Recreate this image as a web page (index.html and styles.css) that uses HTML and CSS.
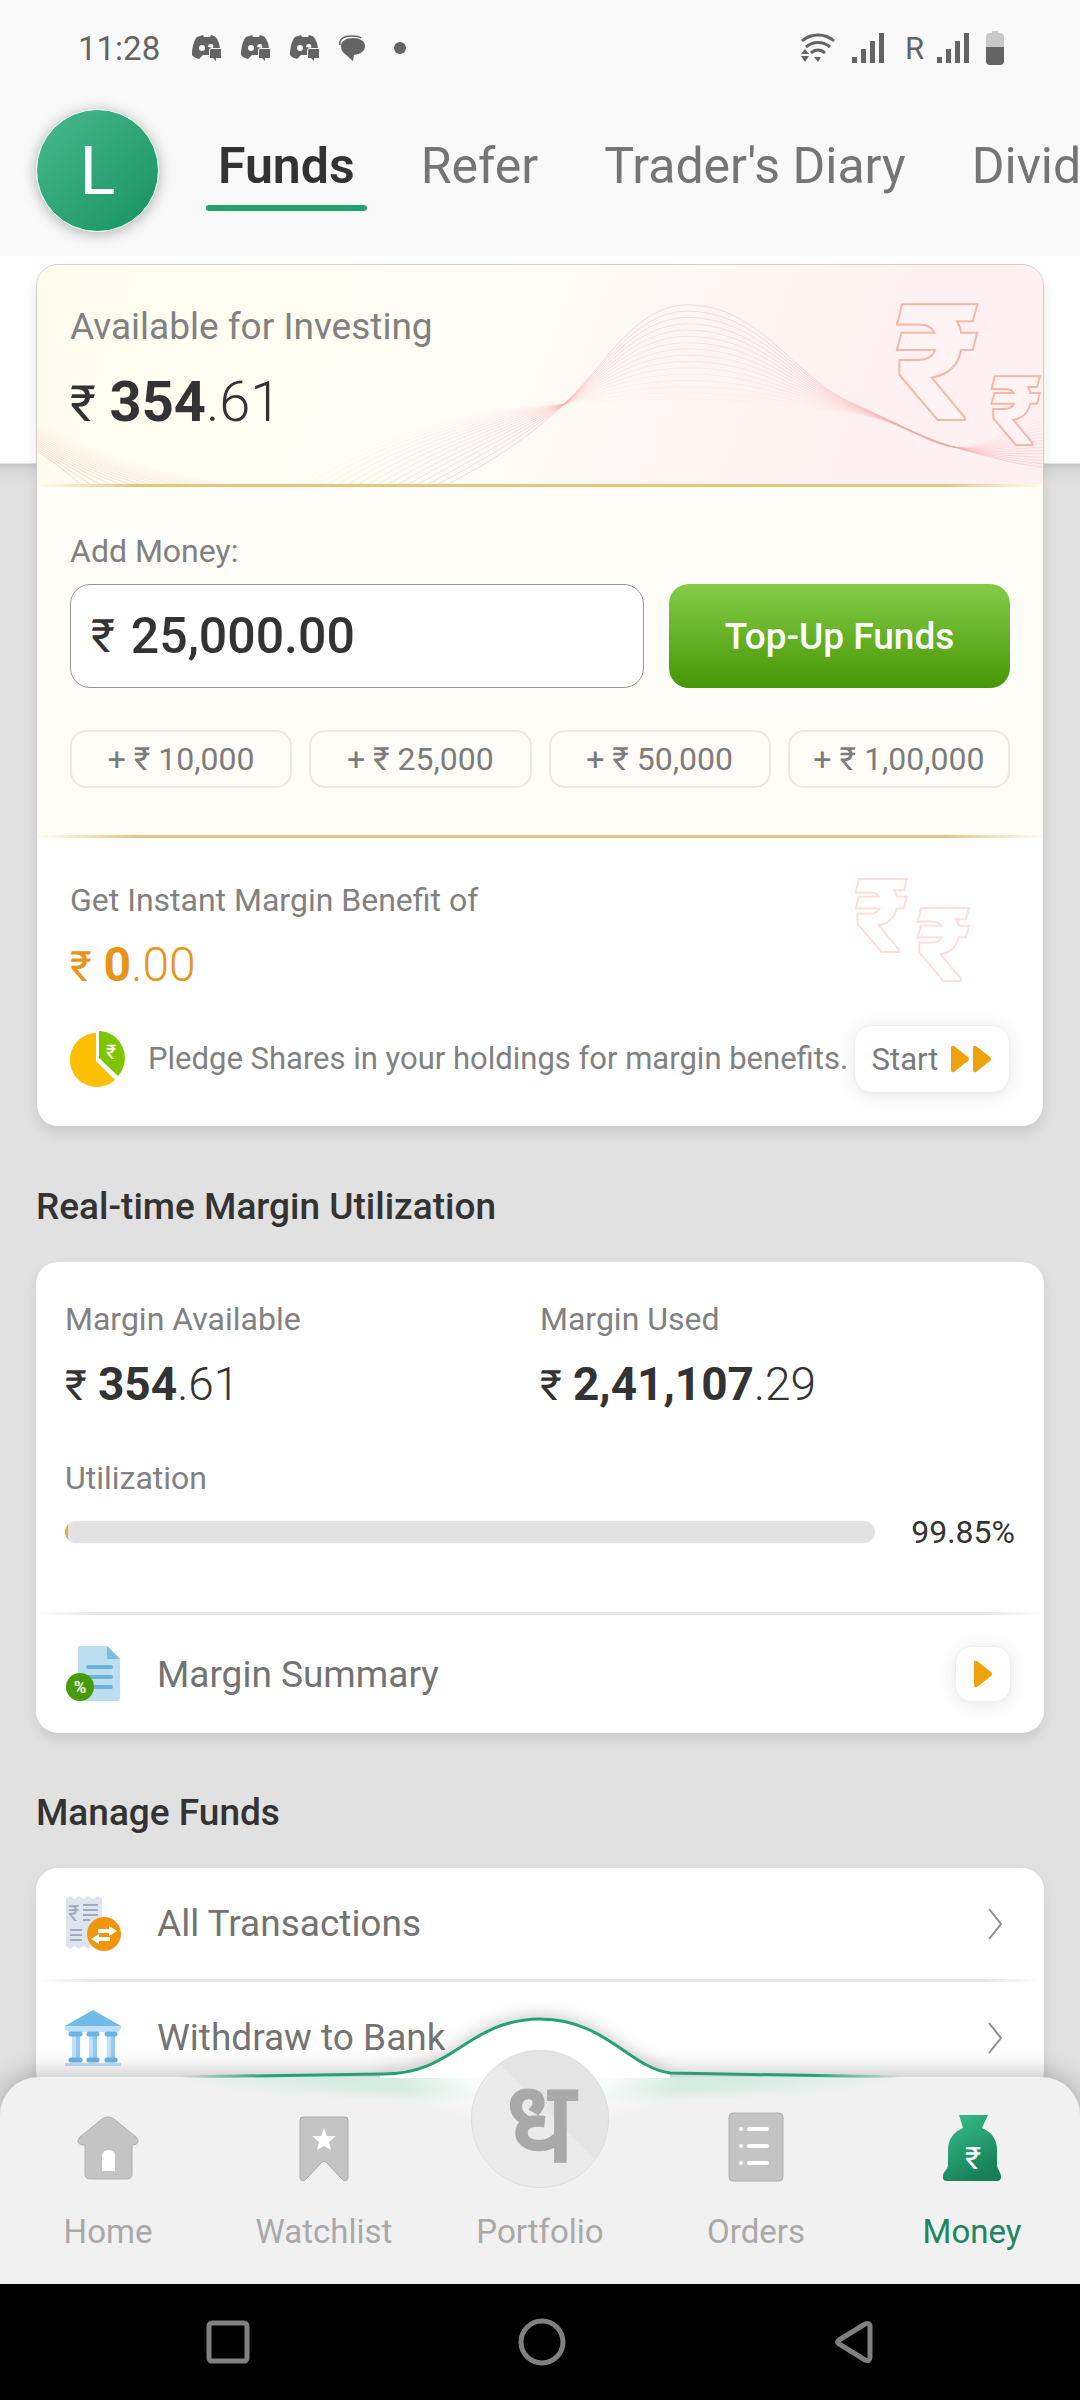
FILE: index.html
```html
<!DOCTYPE html>
<html lang="en">
<head>
    <meta charset="UTF-8">
    <meta name="viewport" content="width=device-width, initial-scale=1.0">
    <title>Funds</title>
    <link rel="stylesheet" href="styles.css">
</head>
<body>
    <!-- Shared shapes -->
    <svg class="defs" width="0" height="0" aria-hidden="true">
        <symbol id="discord" viewBox="0 0 30 26">
            <path fill-rule="evenodd" d="M8 1l3-1 1 2h6l1-2 3 1c3 1 5 6 6 12h-8c-2 0-3 1-3 3v4h-6l-2 2-2 2C4 23 1 22 0 20 0 12 2 5 5 2zM10 10a3 3 0 1 0 0 6 3 3 0 0 0 0-6zM19 9c-2 0-3 1-3 3l5 1c1-2 0-4-2-4z"/>
            <path d="M19 14h10v9h-5v3l-3-3h-3v-8z"/>
        </symbol>
        <symbol id="signal" viewBox="0 0 32 30">
            <path d="M0 24h5v6H0zM9 16h5v14H9zM18 8h5v22h-5zM27 0h5v30h-5z"/>
        </symbol>
        <symbol id="play" viewBox="0 0 20 28">
            <path d="M1 3Q1 0 4 1L18 12Q20 14 18 16L4 27Q1 28 1 25z"/>
        </symbol>
        <symbol id="chevron" viewBox="0 0 16 32">
            <path d="M2 1L14 16 2 31" fill="none" stroke="#8d8d8d" stroke-width="2"/>
        </symbol>
    </svg>

    <header class="header">
        <div class="status-bar">
            <div class="status-left">
                <span class="clock">11:28</span>
                <svg width="30" height="26"><use href="#discord"/></svg>
                <svg width="30" height="26"><use href="#discord"/></svg>
                <svg width="30" height="26"><use href="#discord"/></svg>
                <svg width="28" height="26" viewBox="0 0 28 26">
                    <path d="M1 10C0 3 6 1 12 1c5 0 8 0 10 2" fill="none" stroke="#646464" stroke-width="1.5"/>
                    <path d="M14 3c7 0 12 3 12 8s-4 8-11 9l-1 6-8-7c-3-2-4-5-4-8 0-5 5-8 12-8z"/>
                </svg>
                <span class="dot"></span>
            </div>
            <div class="status-right">
                <svg width="34" height="30" viewBox="0 0 34 30">
                    <g fill="none" stroke="#646464" stroke-width="3">
                        <path d="M1 8C10 0 24 0 33 8M5 14c7-6 17-6 24 0M10 20c4-4 10-4 14 0"/>
                    </g>
                    <path d="M13 24h7l-3 5zM0 21l4-5 4 5zM0 23h8l-4 6z"/>
                </svg>
                <svg width="32" height="30"><use href="#signal"/></svg>
                <span class="roaming">R</span>
                <svg width="32" height="30"><use href="#signal"/></svg>
                <svg width="18" height="34" viewBox="0 0 18 34">
                    <path fill="#c9c9c9" d="M6 0h6v2h2q4 0 4 4v11H0V6q0-4 4-4h2z"/>
                    <path d="M0 16h18v14q0 4-4 4H4q-4 0-4-4z"/>
                </svg>
            </div>
        </div>
        <nav class="tabs">
            <a class="avatar" href="#profile">L</a>
            <a class="tab active" href="#funds">Funds</a>
            <a class="tab" href="#refer">Refer</a>
            <a class="tab" href="#diary">Trader's Diary</a>
            <a class="tab" href="#dividends">Dividends</a>
        </nav>
    </header>

    <main class="content">
        <section class="card funds-card">
            <div class="available">
                <svg class="waves" id="waves" viewBox="0 0 1010 220" preserveAspectRatio="none" aria-hidden="true"></svg>
                <svg class="rupees" width="150" height="180" viewBox="0 0 150 180" aria-hidden="true">
                    <text x="2" y="140" font-size="160">₹</text>
                    <text x="98" y="165" font-size="94">₹</text>
                </svg>
                <p class="label large">Available for Investing</p>
                <p class="amount big"><span class="sign">₹</span> <b>354</b>.61</p>
            </div>
            <hr class="gold">
            <form class="add-money">
                <label class="label" for="money">Add Money:</label>
                <div class="money-row">
                    <div class="money-box">
                        <span>₹</span>
                        <input type="text" id="money" value="25,000.00">
                    </div>
                    <button class="topup" type="button">Top-Up Funds</button>
                </div>
                <div class="chips">
                    <button type="button">+ ₹ 10,000</button>
                    <button type="button">+ ₹ 25,000</button>
                    <button type="button">+ ₹ 50,000</button>
                    <button type="button">+ ₹ 1,00,000</button>
                </div>
            </form>
            <hr class="gold">
            <div class="benefit">
                <svg class="rupees faint" width="124" height="110" viewBox="0 0 124 110" aria-hidden="true">
                    <text x="2" y="73" font-size="100">₹</text>
                    <text x="64" y="102" font-size="100">₹</text>
                </svg>
                <p class="label">Get Instant Margin Benefit of</p>
                <p class="amount orange"><span class="sign">₹</span> <b>0</b>.00</p>
                <div class="pledge">
                    <svg width="56" height="58" viewBox="0 0 56 58">
                        <path fill="#fcbf02" d="M26 3v28l19 19A27 27 0 1 1 26 3z"/>
                        <path fill="#80c400" d="M29 1a27 27 0 0 1 19 45L29 28z"/>
                        <text x="36" y="29" font-size="20" font-weight="400" fill="#fff">₹</text>
                    </svg>
                    <p class="label">Pledge Shares in your holdings for margin benefits.</p>
                    <button class="start" type="button">Start
                        <span class="forward">
                            <svg width="20" height="28"><use href="#play"/></svg>
                            <svg width="20" height="28"><use href="#play"/></svg>
                        </span>
                    </button>
                </div>
            </div>
        </section>

        <h2>Real-time Margin Utilization</h2>
        <section class="card">
            <div class="margin">
                <div class="margin-grid">
                    <div>
                        <p class="label">Margin Available</p>
                        <p class="amount"><span class="sign">₹</span> <b>354</b>.61</p>
                    </div>
                    <div>
                        <p class="label">Margin Used</p>
                        <p class="amount"><span class="sign">₹</span> <b>2,41,107</b>.29</p>
                    </div>
                </div>
                <p class="label">Utilization</p>
                <div class="usage">
                    <div class="bar"><div class="bar-fill" style="width: 0.4%"></div></div>
                    <span>99.85%</span>
                </div>
            </div>
            <hr>
            <div class="row summary">
                <svg width="56" height="56" viewBox="0 0 56 56">
                    <path fill="#bbdff0" d="M15 0h27l13 13v40q0 2-2 2H15q-2 0-2-2V2q0-2 2-2z"/>
                    <path fill="#7cbddd" d="M42 0l13 13H42z"/>
                    <path stroke="#6fb1d6" stroke-width="4" stroke-linecap="round" d="M23 21h23M23 31h23M23 41h23"/>
                    <circle cx="15" cy="41" r="14" fill="#4a9b0b"/>
                    <text x="15" y="47" text-anchor="middle" font-size="17" font-weight="500" fill="#fff">%</text>
                </svg>
                <span>Margin Summary</span>
                <button class="open" type="button" aria-label="Open margin summary">
                    <svg width="20" height="28"><use href="#play"/></svg>
                </button>
            </div>
        </section>

        <h2>Manage Funds</h2>
        <section class="card">
            <a class="row" href="#transactions">
                <svg width="56" height="56" viewBox="0 0 56 56">
                    <path fill="#dfe5ef" d="M1 3l4-3 4 3 5-3 5 3 4-3 5 3 5-3 4 3v47l-4 3-5-3-5 3-4-3-5 3-5-3-4 3-4-3z"/>
                    <path stroke="#9fabbd" stroke-width="2" d="M18 9h15M18 14h15M18 19h15M18 24h7M5 34h12M5 39h12M5 44h12"/>
                    <text x="3" y="25" font-size="22" fill="#9fabbd">₹</text>
                    <circle cx="39" cy="38" r="17" fill="#f0950c"/>
                    <path fill="#fff" d="M33 33h11v-3l8 5-8 5v-3H33zM45 41H34v-3l-8 5 8 5v-3h11z"/>
                </svg>
                <span>All Transactions</span>
                <svg class="chevron" width="16" height="32"><use href="#chevron"/></svg>
            </a>
            <hr>
            <a class="row" href="#withdraw">
                <svg width="56" height="56" viewBox="0 0 56 56">
                    <path fill="#c0e0fa" d="M0 16h56v3l-3 3H3l-3-3zM7 23h8v28H7zM24 23h8v28h-8zM42 23h8v28h-8zM0 53h56v3H0z"/>
                    <path fill="#90cbf7" d="M11 25h4v24h-4zM28 25h4v24h-4zM46 25h4v24h-4z"/>
                    <path fill="#6ebde8" d="M28 0l28 16H0z"/>
                    <path stroke="#6cb3df" stroke-width="5" stroke-linecap="round" d="M6 24h9M24 24h8M42 24h8M6 50h9M24 50h8M42 50h8"/>
                </svg>
                <span>Withdraw to Bank</span>
                <svg class="chevron" width="16" height="32"><use href="#chevron"/></svg>
            </a>
        </section>
    </main>

    <footer class="footer">
        <nav class="bottom-nav">
            <svg class="bump" width="740" height="80" viewBox="0 0 740 80" aria-hidden="true">
                <defs>
                    <linearGradient id="edge">
                        <stop offset="0" stop-color="#25a274" stop-opacity="0"/>
                        <stop offset=".12" stop-color="#25a274"/>
                        <stop offset=".88" stop-color="#25a274"/>
                        <stop offset="1" stop-color="#25a274" stop-opacity="0"/>
                    </linearGradient>
                </defs>
                <path class="bump-fill" d="M210 80V76C285 78 295 22 370 21 435 21 460 70 500 75V80z" fill="#fff"/>
                <path d="M10 79L210 76C285 78 295 22 370 21 435 21 460 70 500 75L730 79" fill="none" stroke="url(#edge)" stroke-width="3"/>
            </svg>
            <a href="#home">
                <svg width="62" height="66" viewBox="0 0 62 66">
                    <path d="M25 3q6-4 12 0l22 18q5 6-2 8h-2v29q0 5-5 5H13q-5 0-5-5V29H5q-7-2-2-8z" fill="#c4c4c4" stroke="#b0b0b0"/>
                    <path d="M25 55V41q0-7 7-7t6 7v14z" fill="#fff"/>
                </svg>
                Home
            </a>
            <a href="#watchlist">
                <svg width="50" height="66" viewBox="0 0 50 66">
                    <path d="M4 1h42q3 0 3 3v58q-2 5-6 1L27 46q-2-2-4 0L7 63q-4 4-6-1V4q0-3 3-3z" fill="#c4c4c4" stroke="#a9a9a9"/>
                    <path d="M25 12l3 8 9 0-7 6 2 8-7-4-7 4 2-8-7-6 9 0z" fill="#fff"/>
                </svg>
                Watchlist
            </a>
            <a href="#portfolio" class="portfolio">
                <span class="logo" lang="hi">ध</span>
                Portfolio
            </a>
            <a href="#orders">
                <svg width="56" height="70" viewBox="0 0 56 70">
                    <rect x="1" y="1" width="54" height="68" rx="4" fill="#c4c4c4" stroke="#b0b0b0"/>
                    <path d="M13 17h0M13 34h0M13 51h0M21 17h18M21 34h18M21 51h18" stroke="#fff" stroke-width="4" stroke-linecap="round"/>
                </svg>
                Orders
            </a>
            <a href="#money" class="current">
                <svg width="60" height="68" viewBox="0 0 60 68">
                    <defs>
                        <linearGradient id="bag" x2=".5" y2="1">
                            <stop offset="0" stop-color="#38c08e"/>
                            <stop offset="1" stop-color="#178058"/>
                        </linearGradient>
                    </defs>
                    <path d="M17 1h29l-6 13c10 4 15 12 15 22v16c1 4 4 6 4 11q0 4-4 4H5q-5 0-4-5c0-4 4-6 5-10V36C6 26 11 18 21 14z" fill="url(#bag)"/>
                    <text x="31" y="55" text-anchor="middle" font-size="31" fill="#fff">₹</text>
                </svg>
                Money
            </a>
        </nav>
        <div class="system-nav">
            <button type="button" aria-label="Recent apps">
                <svg width="44" height="44" viewBox="0 0 44 44"><rect x="3" y="3" width="38" height="38" rx="3"/></svg>
            </button>
            <button type="button" aria-label="Home screen">
                <svg width="48" height="48" viewBox="0 0 48 48"><circle cx="24" cy="24" r="21"/></svg>
            </button>
            <button type="button" aria-label="Back">
                <svg width="40" height="44" viewBox="0 0 40 44"><path d="M5 20L31 4q5-2 5 3v30q0 5-5 3L5 24q-3-2 0-4z"/></svg>
            </button>
        </div>
    </footer>

    <script src="waves.js"></script>
</body>
</html>
```
FILE: styles.css
```css
* {
    box-sizing: border-box;
}
body {
    margin: 0;
    min-height: 100vh;
    display: flex;
    flex-direction: column;
    font-family: Roboto, sans-serif;
    background-color: #e1e1e1;
    color: #333;
    overflow-x: hidden;
}
p, h2 {
    margin: 0;
}
a {
    color: inherit;
    text-decoration: none;
}
button, input {
    font-family: inherit;
}
svg {
    flex-shrink: 0;
}
.defs {
    position: absolute;
}

/* Header */
.header {
    background-color: #f9f9f9;
    height: 256px;
    overflow: hidden;
}
.status-bar {
    display: flex;
    justify-content: space-between;
    align-items: center;
    height: 96px;
    padding: 0 76px 0 78px;
    color: #646464;
    fill: #646464;
    font-size: 33px;
}
.status-left {
    display: flex;
    align-items: center;
    gap: 19px;
}
.clock {
    margin-right: 13px;
}
.dot {
    width: 12px;
    height: 12px;
    margin-left: 8px;
    border-radius: 50%;
    background-color: #646464;
}
.status-right {
    display: flex;
    align-items: center;
    gap: 17px;
}
.roaming {
    font-size: 31px;
    margin-right: -4px;
    margin-left: 4px;
}
.tabs {
    display: flex;
    align-items: center;
    padding-left: 36px;
    gap: 42px;
    height: 148px;
}
.avatar {
    width: 123px;
    height: 123px;
    flex-shrink: 0;
    margin-right: 5px;
    border-radius: 50%;
    border: 1px solid #e5fff5;
    background-image: linear-gradient(135deg, #4ab990, #16925f);
    box-shadow: 0 2px 14px rgba(0, 0, 0, 0.3);
    color: white;
    font-size: 66px;
    line-height: 123px;
    text-align: center;
}
.tab {
    flex-shrink: 0;
    padding: 0 12px 2px;
    border-bottom: 6px solid transparent;
    color: #757575;
    font-size: 50px;
    line-height: 74px;
}
.tab.active {
    position: relative;
    color: #333;
    font-weight: 600;
}
.tab.active::after {
    content: "";
    position: absolute;
    left: 0;
    right: 0;
    bottom: -6px;
    height: 6px;
    border-radius: 3px;
    background-color: #25a274;
}

/* Content */
.content {
    flex: 1;
    padding: 8px 36px 20px;
    background-image: linear-gradient(#fff 207px, #c6c6c6 208px, #d8d8d8 214px, #e1e1e1 230px);
}
.card {
    border-radius: 22px;
    background-color: white;
    box-shadow: 0 6px 12px rgba(0, 0, 0, 0.1);
    overflow: hidden;
}
.funds-card {
    border: 1px solid #d0d0d0;
}
h2 {
    padding: 58px 0 33px;
    font-size: 37px;
    line-height: 44px;
    font-weight: 500;
}
hr {
    height: 3px;
    margin: 0;
    border: 0;
    background-image: linear-gradient(90deg, transparent, #e6e6e6 6%, #e6e6e6 94%, transparent);
}
hr.gold {
    background-color: #fefdf4;
    background-image: linear-gradient(90deg, transparent, #e6c57c 10%, #e6c57c 90%, transparent);
}
.label {
    color: #818181;
    font-size: 32px;
    line-height: 40px;
}
.label.large {
    font-size: 37px;
    line-height: 44px;
}
.amount {
    font-size: 46px;
    line-height: 56px;
    font-weight: 300;
    margin-top: 17px;
}
.amount b {
    font-weight: 700;
}
.amount .sign {
    font-size: 42px;
    line-height: 1;
    font-weight: 400;
}
.amount.big {
    font-size: 56px;
    line-height: 64px;
    margin-top: 21px;
}
.amount.big .sign {
    font-size: 50px;
}
.amount.orange {
    color: #e8941a;
    font-size: 48px;
}
.available, .benefit {
    position: relative;
}
.available {
    padding: 40px 33px 50px;
    background-image: linear-gradient(110deg, #fffcee, #fffcf5 45%, #fff0f1 85%);
}
.waves {
    position: absolute;
    left: 0;
    top: 0;
    width: 100%;
    height: 100%;
    fill: none;
    stroke: #f5a9a9;
}
.rupees {
    position: absolute;
    right: 0;
    top: 14px;
    fill: #fff3f3;
    stroke: #f6b7a9;
    stroke-width: 4;
    paint-order: stroke;
    font-weight: 700;
}
.rupees.faint {
    right: 66px;
    top: 40px;
    fill: #fff;
    stroke: #fbdfda;
}

.add-money {
    padding: 44px 33px 47px;
    background-color: #fefdf7;
}
.add-money .label {
    display: block;
}
.money-row {
    display: flex;
    gap: 25px;
    margin-top: 13px;
}
.money-box {
    flex: 1;
    min-width: 0;
    display: flex;
    align-items: center;
    gap: 16px;
    padding: 0 20px;
    border: 1px solid #999;
    border-radius: 20px;
    background-color: white;
    font-size: 46px;
}
.money-box input {
    flex: 1;
    min-width: 0;
    padding: 0;
    border: 0;
    outline: none;
    background: none;
    color: #333;
    font-size: 50px;
    font-weight: 500;
}
.topup {
    width: 341px;
    height: 104px;
    border: 0;
    border-radius: 20px;
    background-image: linear-gradient(#84cc48, #479705);
    color: white;
    font-size: 37px;
    font-weight: 500;
}
.chips {
    display: flex;
    gap: 17px;
    margin-top: 42px;
}
.chips button {
    flex: 1;
    height: 58px;
    padding: 0;
    border: 2px solid #e9e9e5;
    border-radius: 16px;
    background: none;
    color: #7c7c7a;
    font-size: 32px;
}

.benefit {
    padding: 42px 33px 33px;
}
.pledge {
    display: flex;
    align-items: center;
    gap: 12px;
    margin-top: 32px;
}
.pledge .label {
    flex: 1;
    min-width: 0;
    margin-left: 10px;
    white-space: nowrap;
    font-size: 31px;
}
.start, .open {
    display: flex;
    align-items: center;
    justify-content: center;
    flex-shrink: 0;
    border: 1px solid #efefef;
    background-color: white;
    box-shadow: 0 2px 18px rgba(0, 0, 0, 0.1);
    fill: #eea20e;
}
.start {
    gap: 12px;
    width: 156px;
    height: 68px;
    padding: 0;
    border-radius: 18px;
    color: #7a7a7a;
    font-size: 31px;
}
.forward {
    display: flex;
    gap: 2px;
}
.open {
    width: 56px;
    height: 56px;
    margin-left: auto;
    margin-right: 4px;
    padding: 0;
    border-radius: 16px;
}

/* Margin card */
.margin {
    padding: 37px 29px 60px;
}
.margin-grid {
    display: grid;
    grid-template-columns: 1fr 1fr;
    margin-bottom: 46px;
}
.usage {
    display: flex;
    align-items: center;
    gap: 36px;
    margin-top: 14px;
    font-size: 32px;
    line-height: 40px;
}
.bar {
    flex: 1;
    height: 22px;
    border-radius: 11px;
    background-color: #e2e2e2;
    overflow: hidden;
}
.bar-fill {
    height: 100%;
    background-color: #e2ab3e;
}
.row {
    display: flex;
    align-items: center;
    gap: 36px;
    height: 111px;
    padding: 0 29px;
    color: #737373;
    font-size: 37px;
}
.row.summary {
    height: 118px;
}
.chevron {
    margin-left: auto;
    margin-right: 12px;
}

/* Bottom bars */
.footer {
    position: relative;
    margin-top: -40px;
}
.bottom-nav {
    position: relative;
    display: grid;
    grid-template-columns: repeat(5, 1fr);
    grid-template-rows: 100%;
    height: 207px;
    border-radius: 38px 38px 0 0;
    background-color: #f1f1f1;
    background-image: radial-gradient(140px 50px at 50% 0, #fff 40%, transparent), radial-gradient(360px 26px at 50% 0, #d5ece2 60%, transparent);
    box-shadow: 0 -4px 24px rgba(0, 0, 0, 0.25);
    color: #a9a9a9;
    font-size: 33px;
    line-height: 40px;
}
.bottom-nav a {
    position: relative;
    display: flex;
    flex-direction: column;
    align-items: center;
    justify-content: flex-end;
    gap: 30px;
    padding-bottom: 32px;
}
.bottom-nav a.portfolio {
    gap: 24px;
}
.bottom-nav a.current {
    color: #1f8560;
}
.bump {
    position: absolute;
    left: 50%;
    top: -79px;
    margin-left: -370px;
}
.bump-fill {
    filter: drop-shadow(0 -4px 8px rgba(0, 0, 0, 0.2));
}
.logo {
    width: 138px;
    height: 138px;
    border: 1px solid #ddd;
    border-radius: 50%;
    background-image: linear-gradient(45deg, #ebebeb 55%, #e4e4e4 56%);
    font-size: 112px;
    font-weight: 700;
    line-height: 144px;
    text-align: center;
}
.system-nav {
    display: flex;
    justify-content: space-around;
    align-items: center;
    height: 116px;
    padding: 0 72px;
    background-color: black;
}
.system-nav button {
    display: flex;
    padding: 0;
    border: 0;
    background: none;
}
.system-nav svg {
    fill: none;
    stroke: #808080;
    stroke-width: 5;
}
```
FILE: waves.js
```js
// Draws the fan of curves behind the available balance
const waves = document.getElementById('waves');
const count = 16;

function addLine(d, opacity) {
    const path = document.createElementNS('http://www.w3.org/2000/svg', 'path');
    path.setAttribute('d', d);
    path.setAttribute('opacity', opacity);
    waves.appendChild(path);
}

for (let i = 0; i < count; i++) {
    const t = i / (count - 1);
    const top = 40 + 95 * t;
    const opacity = 0.45 - 0.4 * t;
    addLine(`M${413 - 150 * t} 220 C${460 - 130 * t} ${195 - 20 * t} ${490 - 60 * t} ${176 - 31 * t} 529 140` +
        ` C${568 - 8 * t} ${104 + 31 * t} 600 ${top} 653 ${top}` +
        ` C725 ${top} 760 ${112 + 30 * t} 815 ${137 + 12 * t}` +
        ` S890 ${174 + 6 * t} 921 183 S980 ${200 - 40 * t} 1010 ${203 - 50 * t}`, opacity);
    addLine(`M0 ${187 - 30 * t} Q${25 + 60 * t} ${203 + 5 * t} ${43 + 150 * t} 220`, opacity);
}
```
